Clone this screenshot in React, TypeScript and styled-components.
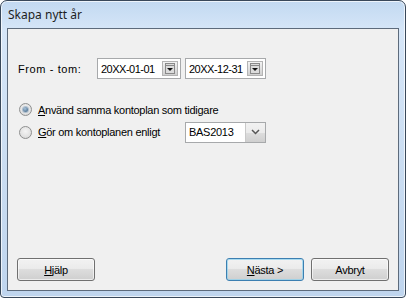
import React from "react";
import styled, { createGlobalStyle } from "styled-components";

const Global = createGlobalStyle`
  html, body { margin: 0; padding: 0; background: #ffffff; }
  * { box-sizing: border-box; }
`;

const Window = styled.div`
  width: 406px;
  height: 298px;
  border: 1px solid #39485a;
  border-radius: 7px 7px 4px 4px;
  background: linear-gradient(180deg, #c2d9f1 0%, #d6e6f8 10%, #c9dcf1 60%, #bfd5ee 100%);
  box-shadow: inset 0 0 0 1px rgba(255, 255, 255, 0.7);
  padding: 0 6px 6px 6px;
  display: flex;
  flex-direction: column;
  font-family: "Liberation Sans", Arial, sans-serif;
`;

const TitleBar = styled.div`
  height: 27px;
  display: flex;
  align-items: center;
  padding-left: 1px;
  padding-bottom: 1px;
  font-family: "Noto Sans", "Open Sans", sans-serif;
  font-size: 12px;
  color: #1e1e1e;
`;

const Client = styled.div`
  flex: 1;
  border: 1px solid #5d6b7c;
  background: #f0f0f0;
  display: flex;
  flex-direction: column;
  padding: 29px 9px 9px 9px;
  font-size: 11px;
  letter-spacing: -0.28px;
  color: #000;
  white-space: nowrap;
`;

const DateRow = styled.div`
  display: flex;
  align-items: center;
  height: 21px;
`;

const Label = styled.span`
  width: 80px;
  padding-left: 1px;
  letter-spacing: 0.6px;
`;

const Field = styled.div<{ $w: number }>`
  width: ${(p) => p.$w}px;
  height: 21px;
  background: #fff;
  border: 1px solid #a7a9ab;
  display: flex;
  align-items: center;
  justify-content: space-between;
  padding-left: 3px;
  padding-right: 2px;
  margin-right: 4px;
  font-size: 11px;
  letter-spacing: -0.5px;
`;

const CalButton = styled.span`
  width: 16px;
  height: 15px;
  display: flex;
`;

const RadioGroup = styled.div`
  display: flex;
  flex-direction: column;
  margin-top: 21px;
`;

const RadioRow = styled.div<{ $h: number }>`
  display: flex;
  align-items: center;
  height: ${(p) => p.$h}px;
  padding-left: 2px;
`;

const RadioCircle = styled.span<{ $checked?: boolean }>`
  width: 13px;
  height: 13px;
  border-radius: 50%;
  border: 1px solid #8e8f8f;
  background: radial-gradient(circle at 50% 40%, #f4f4f4 0%, #e2e2e2 60%, #d0d0d0 100%);
  display: flex;
  align-items: center;
  justify-content: center;
  margin-right: 6px;
  flex-shrink: 0;
  &::after {
    content: "";
    display: ${(p) => (p.$checked ? "block" : "none")};
    width: 5px;
    height: 5px;
    border-radius: 50%;
    background: radial-gradient(circle at 40% 35%, #a8c4dc 0%, #4d6f8e 80%);
    box-shadow: 0 0 0 1px rgba(120, 150, 180, 0.5);
  }
`;

const RadioText = styled.span<{ $w?: number }>`
  ${(p) => (p.$w ? `width: ${p.$w}px;` : "")}
`;

const Combo = styled.div`
  width: 81px;
  height: 21px;
  background: #fff;
  border: 1px solid #a7a9ab;
  display: flex;
  align-items: stretch;
  font-size: 11px;
`;

const ComboText = styled.span`
  flex: 1;
  display: flex;
  align-items: center;
  padding-left: 3px;
`;

const ComboButton = styled.span`
  width: 20px;
  border-left: 1px solid #c9c9c9;
  background: linear-gradient(180deg, #f2f2f2 0%, #ebebeb 50%, #dddddd 51%, #cfcfcf 100%);
  display: flex;
  align-items: center;
  justify-content: center;
`;

const Spacer = styled.div`
  flex: 1;
`;

const ButtonRow = styled.div`
  display: flex;
  align-items: center;
`;

const Button = styled.div<{ $default?: boolean }>`
  width: 78px;
  height: 23px;
  border: 1px solid ${(p) => (p.$default ? "#3c7fb1" : "#707070")};
  border-radius: 3px;
  background: linear-gradient(180deg, #f2f2f2 0%, #ebebeb 45%, #dddddd 50%, #cfcfcf 100%);
  box-shadow: inset 0 0 0 1px ${(p) => (p.$default ? "rgba(140,210,240,0.7)" : "rgba(255,255,255,0.6)")};
  display: flex;
  align-items: center;
  justify-content: center;
  font-size: 11px;
`;

const Gap = styled.div<{ $w: number }>`
  width: ${(p) => p.$w}px;
`;

const CalIcon = () => (
  <svg width="16" height="15" viewBox="0 0 16 15">
    <defs>
      <linearGradient id="cg" x1="0" y1="0" x2="0" y2="1">
        <stop offset="0" stopColor="#f4f4f4" />
        <stop offset="1" stopColor="#cfcfcf" />
      </linearGradient>
    </defs>
    <rect x="0.5" y="0.5" width="15" height="14" fill="url(#cg)" stroke="#b4b4b4" />
    <rect x="3.5" y="2.5" width="9" height="10" fill="#dcdcdc" stroke="#8a8a8a" />
    <line x1="4" y1="4.5" x2="12" y2="4.5" stroke="#8a8a8a" />
    <path d="M5 7 L11 7 L8 10 Z" fill="#111" />
  </svg>
);

const Chevron = () => (
  <svg width="9" height="6" viewBox="0 0 9 6">
    <path d="M1 1 L4.5 4.5 L8 1" fill="none" stroke="#555" strokeWidth="1.5" />
  </svg>
);

const U = styled.span`
  text-decoration: underline;
`;

export default function App() {
  return (
    <>
      <Global />
      <Window>
        <TitleBar>Skapa nytt år</TitleBar>
        <Client>
          <DateRow>
            <Label>From - tom:</Label>
            <Field $w={84}>
              <span>20XX-01-01</span>
              <CalButton>
                <CalIcon />
              </CalButton>
            </Field>
            <Field $w={81}>
              <span>20XX-12-31</span>
              <CalButton>
                <CalIcon />
              </CalButton>
            </Field>
          </DateRow>
          <RadioGroup>
            <RadioRow $h={19}>
              <RadioCircle $checked />
              <RadioText>
                <U>A</U>nvänd samma kontoplan som tidigare
              </RadioText>
            </RadioRow>
            <RadioRow $h={26}>
              <RadioCircle />
              <RadioText $w={147}>
                <U>G</U>ör om kontoplanen enligt
              </RadioText>
              <Combo>
                <ComboText>BAS2013</ComboText>
                <ComboButton>
                  <Chevron />
                </ComboButton>
              </Combo>
            </RadioRow>
          </RadioGroup>
          <Spacer />
          <ButtonRow>
            <Button>
              <span>
                <U>H</U>jälp
              </span>
            </Button>
            <Spacer />
            <Button $default>
              <span>
                <U>N</U>ästa &gt;
              </span>
            </Button>
            <Gap $w={7} />
            <Button>Avbryt</Button>
          </ButtonRow>
        </Client>
      </Window>
    </>
  );
}
